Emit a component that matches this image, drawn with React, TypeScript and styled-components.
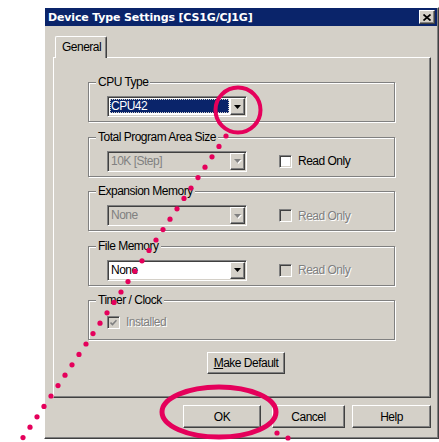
import React from 'react';
import styled, { createGlobalStyle, css } from 'styled-components';

const Global = createGlobalStyle`
  html, body { margin: 0; padding: 0; background: #fff; }
  body { font-family: "Liberation Sans", Arial, sans-serif; font-size: 12px; letter-spacing: -0.5px; color: #000; }
  * { box-sizing: border-box; }
`;

const Page = styled.div`
  position: relative;
  width: 439px;
  height: 442px;
  overflow: hidden;
  padding: 7px 0 0 44px;
`;

const Window = styled.div`
  width: 395px;
  height: 432px;
  background: #d4d0c8;
  border-left: 1px solid #fff;
  border-top: 1px solid #fff;
  border-right: 1px solid #404040;
  border-bottom: 1px solid #404040;
  box-shadow: inset -1px -1px 0 #808080;
  padding: 0 1px 1px 0;
  display: flex;
  flex-direction: column;
`;

const TitleBar = styled.div`
  height: 18px;
  background: #0a246a;
  display: flex;
  align-items: center;
  justify-content: space-between;
  padding: 0 2px 0 3px;
`;

const TitleText = styled.span`
  color: #fff;
  font-family: "DejaVu Sans", Verdana, sans-serif;
  font-weight: bold;
  font-size: 11px;
  letter-spacing: -0.15px;
  white-space: nowrap;
`;

const raised = css`
  background: #d4d0c8;
  border: 1px solid;
  border-color: #fff #404040 #404040 #fff;
  box-shadow: inset -1px -1px 0 #808080;
`;

const CloseButton = styled.div`
  ${raised}
  width: 16px;
  height: 14px;
  display: flex;
  align-items: center;
  justify-content: center;
`;

const Body = styled.div`
  flex: 1;
  display: flex;
  flex-direction: column;
  padding: 10px 6px 0 8px;
`;

const TabRow = styled.div`
  display: flex;
  padding-left: 2px;
  position: relative;
  z-index: 1;
  margin-bottom: -1px;
`;

const Tab = styled.div`
  width: 52px;
  height: 22px;
  background: #d4d0c8;
  border-top: 1px solid #fff;
  border-left: 1px solid #fff;
  border-right: 1px solid #404040;
  box-shadow: inset -1px 0 0 #808080;
  border-top-left-radius: 2px;
  border-top-right-radius: 2px;
  padding: 3px 0 0 6px;
  line-height: 14px;
`;

const Panel = styled.div`
  width: 378px;
  height: 341px;
  border-top: 1px solid #fff;
  border-left: 1px solid #fff;
  border-right: 1px solid #404040;
  border-bottom: 1px solid #404040;
  box-shadow: inset -1px -1px 0 #808080;
  padding: 24px 0 0 34px;
  display: flex;
  flex-direction: column;
`;

const Groups = styled.div`
  display: flex;
  flex-direction: column;
  gap: 14.5px;
`;

const GroupBox = styled.div`
  position: relative;
  width: 307px;
  height: 40px;
  border: 1px solid #808080;
  box-shadow: 1px 1px 0 #fff, inset 1px 1px 0 #fff;
`;

const GroupLabel = styled.span`
  position: absolute;
  top: -8px;
  left: 7px;
  padding: 0 2px;
  background: #d4d0c8;
  line-height: 14px;
  white-space: nowrap;
`;

const GroupRow = styled.div<{ $top?: number }>`
  display: flex;
  align-items: center;
  padding: ${(p) => p.$top ?? 13}px 0 0 18px;
`;

const Combo = styled.div<{ $disabled?: boolean }>`
  width: 140px;
  height: 21px;
  display: flex;
  border: 1px solid;
  border-color: #808080 #fff #fff #808080;
  box-shadow: inset 1px 1px 0 #404040, inset -1px -1px 0 #d4d0c8;
  padding: 1px;
  background: ${(p) => (p.$disabled ? '#d4d0c8' : '#fff')};
`;

const ComboText = styled.div<{ $disabled?: boolean; $selected?: boolean }>`
  flex: 1;
  line-height: 14px;
  white-space: nowrap;
  margin: 1px 1px 2px 1px;
  padding: 0 0 0 1px;
  color: ${(p) => (p.$disabled ? '#808080' : p.$selected ? '#fff' : '#000')};
  ${(p) =>
    p.$selected &&
    css`
      background: #0a246a;
      outline: 1px dotted #d4d0c8;
      outline-offset: -1px;
    `}
`;

const ComboArrow = styled.div`
  ${raised}
  width: 15px;
  height: 17px;
  display: flex;
  align-items: center;
  justify-content: center;
`;

const Check = styled.div<{ $disabled?: boolean; $gap?: number }>`
  width: 13px;
  height: 13px;
  flex: none;
  margin-left: ${(p) => p.$gap ?? 0}px;
  border: 1px solid;
  border-color: #808080 #fff #fff #808080;
  box-shadow: inset 1px 1px 0 #404040, inset -1px -1px 0 #d4d0c8;
  background: ${(p) => (p.$disabled ? '#d4d0c8' : '#fff')};
  display: flex;
  align-items: center;
  justify-content: center;
`;

const CheckLabel = styled.span<{ $disabled?: boolean }>`
  margin-left: 6px;
  line-height: 14px;
  white-space: nowrap;
  color: ${(p) => (p.$disabled ? '#808080' : '#000')};
  text-shadow: ${(p) => (p.$disabled ? '1px 1px 0 #fff' : 'none')};
`;

const PushButton = styled.div<{ $w: number; $h?: number }>`
  ${raised}
  width: ${(p) => p.$w}px;
  height: ${(p) => p.$h ?? 23}px;
  display: flex;
  align-items: center;
  justify-content: center;
  line-height: 14px;
  white-space: nowrap;
`;

const DefaultRow = styled.div`
  display: flex;
  margin: 12px 0 0 119px;
`;

const ButtonRow = styled.div`
  display: flex;
  justify-content: flex-end;
  margin-top: 7px;
`;

const Spacer = styled.div<{ $w: number }>`
  width: ${(p) => p.$w}px;
`;

const Overlay = styled.svg`
  position: absolute;
  left: 0;
  top: 0;
  pointer-events: none;
`;

const Arrow = ({ disabled }: { disabled?: boolean }) => (
  <svg width="7" height="4" viewBox="0 0 7 4" style={{ overflow: 'visible' }}>
    {disabled && <path d="M1 1h7L4.5 5z" fill="#fff" />}
    <path d="M0 0h7L3.5 4z" fill={disabled ? '#808080' : '#000'} />
  </svg>
);

const PINK = '#e5005b';

const dots = Array.from({ length: 30 }, (_, n) => [226 - 7 * n, 136 + 10.4 * n]);

export default function App() {
  return (
    <>
      <Global />
      <Page>
        <Window>
          <TitleBar>
            <TitleText>Device Type Settings [CS1G/CJ1G]</TitleText>
            <CloseButton>
              <svg width="8" height="7" viewBox="0 0 8 7">
                <path d="M0.5 0.5L7.5 6.5M7.5 0.5L0.5 6.5" stroke="#000" strokeWidth="1.7" />
              </svg>
            </CloseButton>
          </TitleBar>
          <Body>
            <TabRow>
              <Tab>General</Tab>
            </TabRow>
            <Panel>
              <Groups>
                <GroupBox>
                  <GroupLabel>CPU Type</GroupLabel>
                  <GroupRow>
                    <Combo>
                      <ComboText $selected>CPU42</ComboText>
                      <ComboArrow>
                        <Arrow />
                      </ComboArrow>
                    </Combo>
                  </GroupRow>
                </GroupBox>
                <GroupBox>
                  <GroupLabel>Total Program Area Size</GroupLabel>
                  <GroupRow>
                    <Combo $disabled>
                      <ComboText $disabled>10K [Step]</ComboText>
                      <ComboArrow>
                        <Arrow disabled />
                      </ComboArrow>
                    </Combo>
                    <Check $gap={32} />
                    <CheckLabel>Read Only</CheckLabel>
                  </GroupRow>
                </GroupBox>
                <GroupBox>
                  <GroupLabel>Expansion Memory</GroupLabel>
                  <GroupRow>
                    <Combo $disabled>
                      <ComboText $disabled>None</ComboText>
                      <ComboArrow>
                        <Arrow disabled />
                      </ComboArrow>
                    </Combo>
                    <Check $gap={32} $disabled />
                    <CheckLabel $disabled>Read Only</CheckLabel>
                  </GroupRow>
                </GroupBox>
                <GroupBox>
                  <GroupLabel>File Memory</GroupLabel>
                  <GroupRow>
                    <Combo>
                      <ComboText>None</ComboText>
                      <ComboArrow>
                        <Arrow />
                      </ComboArrow>
                    </Combo>
                    <Check $gap={32} $disabled />
                    <CheckLabel $disabled>Read Only</CheckLabel>
                  </GroupRow>
                </GroupBox>
                <GroupBox>
                  <GroupLabel>Timer / Clock</GroupLabel>
                  <GroupRow $top={14}>
                    <Check $disabled>
                      <svg width="7" height="7" viewBox="0 0 7 7">
                        <path d="M0.5 3.5L2.5 5.5L6.5 1.2" stroke="#808080" strokeWidth="1.6" fill="none" />
                      </svg>
                    </Check>
                    <CheckLabel $disabled>Installed</CheckLabel>
                  </GroupRow>
                </GroupBox>
              </Groups>
              <DefaultRow>
                <PushButton $w={78} $h={22}>
                  <span>
                    <u>M</u>ake Default
                  </span>
                </PushButton>
              </DefaultRow>
            </Panel>
            <ButtonRow>
              <PushButton $w={78}>OK</PushButton>
              <Spacer $w={11} />
              <PushButton $w={73}>Cancel</PushButton>
              <Spacer $w={7} />
              <PushButton $w={79}>Help</PushButton>
            </ButtonRow>
          </Body>
        </Window>
        <Overlay width="439" height="442" viewBox="0 0 439 442">
          <circle cx="238" cy="110" r="22.5" fill="none" stroke={PINK} strokeWidth="4" />
          <ellipse cx="219" cy="412" rx="57" ry="25" fill="none" stroke={PINK} strokeWidth="5" />
          {dots.map(([x, y], i) => (
            <circle key={i} cx={x} cy={y} r="2.6" fill={PINK} />
          ))}
          <circle cx="277" cy="433" r="2.6" fill={PINK} />
          <circle cx="288" cy="438" r="2.6" fill={PINK} />
        </Overlay>
      </Page>
    </>
  );
}
